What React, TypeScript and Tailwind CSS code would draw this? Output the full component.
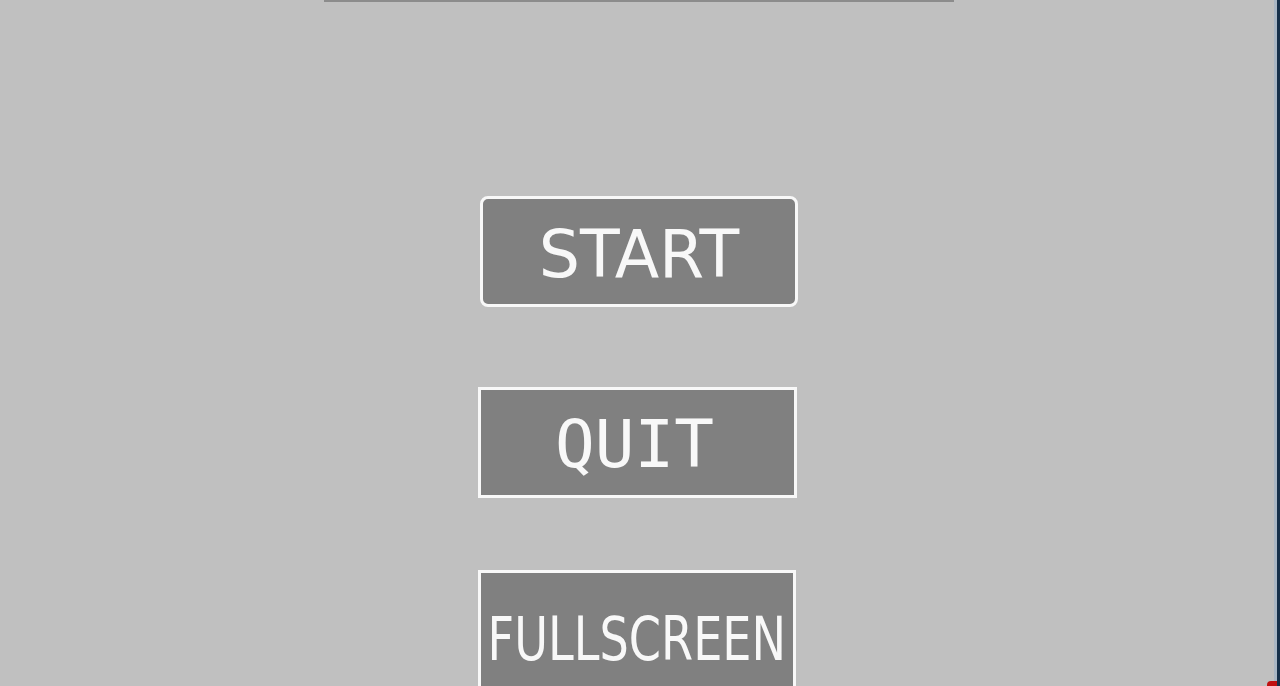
import React from "react";

export default function App() {
  return (
    <div className="relative flex h-[686px] w-[1280px] overflow-hidden bg-[#c0c0c0]">
      <div className="flex flex-1 flex-col items-center pl-[4px]">
        <div className="h-[2px] w-[630px] shrink-0 bg-[#8c8c8c]" />
        <div className="mt-[194px] flex h-[111px] w-[318px] shrink-0 items-center justify-center rounded-[8px] border-[3px] border-[#f8f8f8] bg-[#808080]">
          <span className="text-[65px] leading-none text-[#f8f8f8] [font-family:'DejaVu_Sans',sans-serif] translate-y-[3px]">
            START
          </span>
        </div>
        <div className="mr-[3px] mt-[80px] flex h-[111px] w-[319px] shrink-0 items-center justify-center border-[3px] border-[#f8f8f8] bg-[#808080]">
          <span className="text-[66px] leading-none text-[#f8f8f8] [font-family:'DejaVu_Sans_Mono',monospace] -translate-x-[3px] translate-y-[2px]">
            QUIT
          </span>
        </div>
        <div className="mr-[5px] mt-[72px] flex h-[120px] w-[318px] shrink-0 items-start justify-center border-[3px] border-[#f8f8f8] bg-[#808080]">
          <span className="mt-[36px] inline-block origin-center scale-x-[0.77] whitespace-nowrap text-[60px] leading-none text-[#f8f8f8] [font-family:'DejaVu_Sans',sans-serif]">
            FULLSCREEN
          </span>
        </div>
      </div>
      <div className="w-[3px] bg-[#a9b6c4]" />
      <div className="w-[3px] bg-[#16304a]" />
      <div className="absolute bottom-0 right-[3px] h-[5px] w-[10px] rounded-tl-[4px] bg-[#c01010]" />
    </div>
  );
}
